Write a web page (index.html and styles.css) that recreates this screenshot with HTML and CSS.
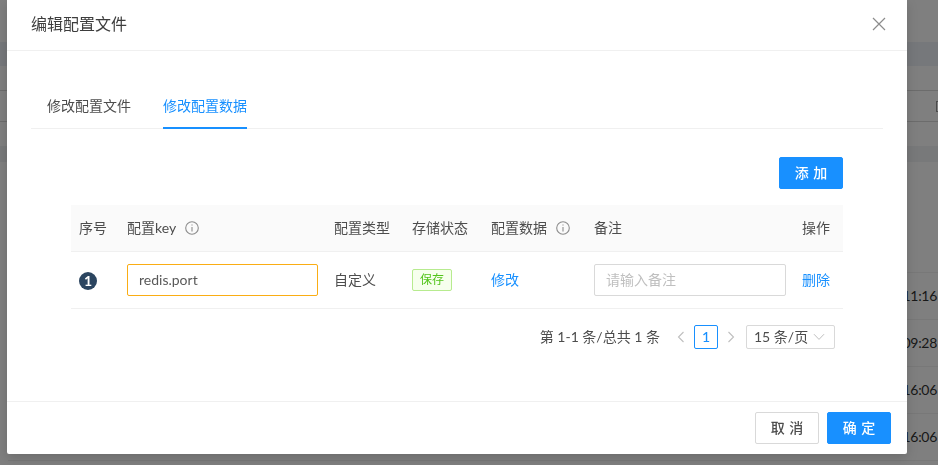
FILE: index.html
```html
<!DOCTYPE html>
<html lang="zh-CN">
<head>
<meta charset="utf-8">
<title>编辑配置文件</title>
<link rel="stylesheet" href="styles.css">
</head>
<body>
<div class="page">
  <div class="bg-top"></div>
  <div class="bg-band"></div>
  <div class="bg-plain bg-h24 bg-line"></div>
  <div class="bg-tool">
    <span class="bg-box"></span>
  </div>
  <div class="bg-plain bg-h24"></div>
  <div class="bg-band2"></div>
  <div class="bg-spacer"></div>
  <div class="bg-row"><span>11:16</span></div>
  <div class="bg-row"><span>09:28</span></div>
  <div class="bg-row"><span>16:06</span></div>
  <div class="bg-row"><span>16:06</span></div>
</div>
<div class="mask"></div>
<section class="modal">
  <header class="modal-head">
    <h1 class="modal-title">编辑配置文件</h1>
    <svg class="close" viewBox="0 0 14 14" aria-label="关闭"><path d="M1 1l12 12M13 1L1 13"/></svg>
  </header>
  <div class="modal-body">
    <nav class="tabs">
      <div class="tab"><span class="tab-label">修改配置文件</span></div>
      <div class="tab"><span class="tab-label tab-active">修改配置数据</span></div>
    </nav>
    <div class="toolbar"><button class="btn btn-primary">添 加</button></div>
    <div class="table">
      <div class="tr thead">
        <div class="td">序号</div>
        <div class="td">配置key<svg class="info" viewBox="0 0 14 14"><circle cx="7" cy="7" r="6.3"/><path d="M7 6v4.4M7 3.4v1.2"/></svg></div>
        <div class="td">配置类型</div>
        <div class="td">存储状态</div>
        <div class="td">配置数据<svg class="info" viewBox="0 0 14 14"><circle cx="7" cy="7" r="6.3"/><path d="M7 6v4.4M7 3.4v1.2"/></svg></div>
        <div class="td">备注</div>
        <div class="td">操作</div>
      </div>
      <div class="tr tbody">
        <div class="td"><span class="num">1</span></div>
        <div class="td"><input class="input input-warn" value="redis.port"></div>
        <div class="td">自定义</div>
        <div class="td"><span class="tag">保存</span></div>
        <div class="td"><a class="link">修改</a></div>
        <div class="td"><input class="input" placeholder="请输入备注"></div>
        <div class="td"><a class="link">删除</a></div>
      </div>
    </div>
    <div class="pager">
      <span class="pager-total">第 1-1 条/总共 1 条</span>
      <svg class="chev" viewBox="0 0 10 12"><path d="M7.5 1L2.5 6l5 5"/></svg>
      <span class="page-cur">1</span>
      <svg class="chev" viewBox="0 0 10 12"><path d="M2.5 1l5 5-5 5"/></svg>
      <span class="page-size">15 条/页<svg class="caret" viewBox="0 0 12 8"><path d="M1 1.2l5 5.2 5-5.2"/></svg></span>
    </div>
  </div>
  <footer class="modal-foot">
    <button class="btn">取 消</button>
    <button class="btn btn-primary">确 定</button>
  </footer>
</section>
</body>
</html>
```

FILE: styles.css
```css
* { box-sizing: border-box; }
html, body { margin: 0; height: 100%; overflow: hidden; }
body {
  font-family: Lato, "Noto Sans CJK SC", sans-serif;
  font-size: 14px;
  line-height: 22px;
  color: #333;
  background: #fff;
}

/* page behind the mask */
.page { height: 465px; overflow: hidden; background: #fff; }
.bg-top { height: 42px; background: #fff; }
.bg-band { height: 24px; background: #edf1f7; }
.bg-plain { background: #fff; }
.bg-h24 { height: 24px; }
.bg-line { height: 25px; border-bottom: 1px solid #d9d9d9; }
.bg-tool {
  height: 31px;
  display: flex;
  justify-content: flex-end;
  align-items: center;
  border-bottom: 1px solid #d9d9d9;
}
.bg-box { width: 2px; height: 11px; border: 1px solid #999; border-right: 0; }
.bg-band2 { height: 16px; background: #f0f2f5; }
.bg-spacer { height: 111px; border-bottom: 1px solid #f0f0f0; margin-left: 8px; }
.bg-row {
  height: 47px;
  margin-left: 8px;
  padding-right: 1px;
  display: flex;
  justify-content: flex-end;
  align-items: center;
  border-bottom: 1px solid #f0f0f0;
  color: #333;
  letter-spacing: -.3px;
}

.mask {
  position: fixed;
  inset: 0;
  background: rgba(0, 0, 0, .5);
}

.modal {
  position: absolute;
  left: 7px;
  top: 0;
  width: 900px;
  height: 454px;
  display: flex;
  flex-direction: column;
  background: #fff;
  border-radius: 0 0 2px 2px;
  box-shadow: 0 4px 12px rgba(0, 0, 0, .15);
}
.modal-head {
  height: 51px;
  flex: none;
  display: flex;
  align-items: center;
  justify-content: space-between;
  padding: 0 21px 2px 24px;
  border-bottom: 1px solid #f0f0f0;
}
.modal-title { margin: 0; font-size: 16px; font-weight: 400; line-height: 22px; color: #3d3d3d; }
.close { width: 14px; height: 14px; fill: none; stroke: #8c8c8c; stroke-width: 1.2; }

.modal-body { flex: 1; padding: 32px 24px 0; }

.tabs { display: flex; height: 46px; border-bottom: 1px solid #f0f0f0; }
.tab { padding: 0 16px; height: 46px; }
.tab-label {
  display: block;
  height: 46px;
  padding: 12px 0 10px;
  border-bottom: 2px solid transparent;
  color: #4d4d4d;
}
.tab-active { color: #1890ff; border-bottom-color: #1890ff; }

.toolbar { display: flex; justify-content: flex-end; padding: 28px 40px 16px 0; }

.btn {
  width: 64px;
  height: 32px;
  padding: 0;
  font: inherit;
  font-weight: 500;
  word-spacing: 1px;
  color: #4d4d4d;
  background: #fff;
  border: 1px solid #d9d9d9;
  border-radius: 2px;
}
.btn-primary { color: #fff; background: #1890ff; border-color: #1890ff; }

.table { margin: 0 40px; }
.tr { display: grid; grid-template-columns: 48px 207px 78px 79px 103px 208px 49px; align-items: center; }
.td { padding: 0 8px; min-width: 0; display: flex; align-items: center; color: #4d4d4d; }
.thead { height: 47px; background: #fafafa; border-bottom: 1px solid #f0f0f0; }
.tbody { height: 57px; border-bottom: 1px solid #f0f0f0; }

.info { width: 14px; height: 14px; margin-left: 9px; fill: none; stroke: #8c8c8c; stroke-width: 1.1; }

.num {
  width: 18px;
  height: 18px;
  border-radius: 50%;
  background: #2b4560;
  color: #fff;
  font-size: 14px;
  font-weight: 700;
  line-height: 18px;
  text-align: center;
  margin-top: 2px;
}

.input {
  width: 100%;
  height: 32px;
  padding: 0 11px 2px;
  font: inherit;
  color: #595959;
  background: #fff;
  border: 1px solid #d9d9d9;
  border-radius: 2px;
  outline: 0;
}
.input::placeholder { color: #bfbfbf; opacity: 1; }
.input-warn { border-color: #faad14; }

.tag {
  height: 22px;
  padding: 0 7px;
  font-size: 12px;
  line-height: 20px;
  color: #52c41a;
  background: #f6ffed;
  border: 1px solid #b7eb8f;
  border-radius: 2px;
}
.link { color: #1890ff; }

.pager {
  display: flex;
  justify-content: flex-end;
  align-items: center;
  height: 24px;
  margin: 16px 48px 0 0;
  color: #4d4d4d;
}
.pager-total { margin-right: 16px; }
.chev { width: 10px; height: 12px; fill: none; stroke: #bfbfbf; stroke-width: 1.1; }
.page-cur {
  width: 24px;
  height: 24px;
  margin: 0 8px;
  border: 1px solid #1890ff;
  border-radius: 2px;
  color: #1890ff;
  font-weight: 500;
  line-height: 22px;
  text-align: center;
}
.page-size {
  width: 89px;
  height: 24px;
  margin-left: 10px;
  padding: 0 9px 0 7px;
  display: flex;
  align-items: center;
  justify-content: space-between;
  border: 1px solid #d9d9d9;
  border-radius: 2px;
}
.caret { width: 12px; height: 8px; fill: none; stroke: #bfbfbf; stroke-width: 1; }

.modal-foot {
  height: 53px;
  flex: none;
  display: flex;
  justify-content: flex-end;
  gap: 8px;
  padding: 10px 16px;
  border-top: 1px solid #f0f0f0;
}
```
